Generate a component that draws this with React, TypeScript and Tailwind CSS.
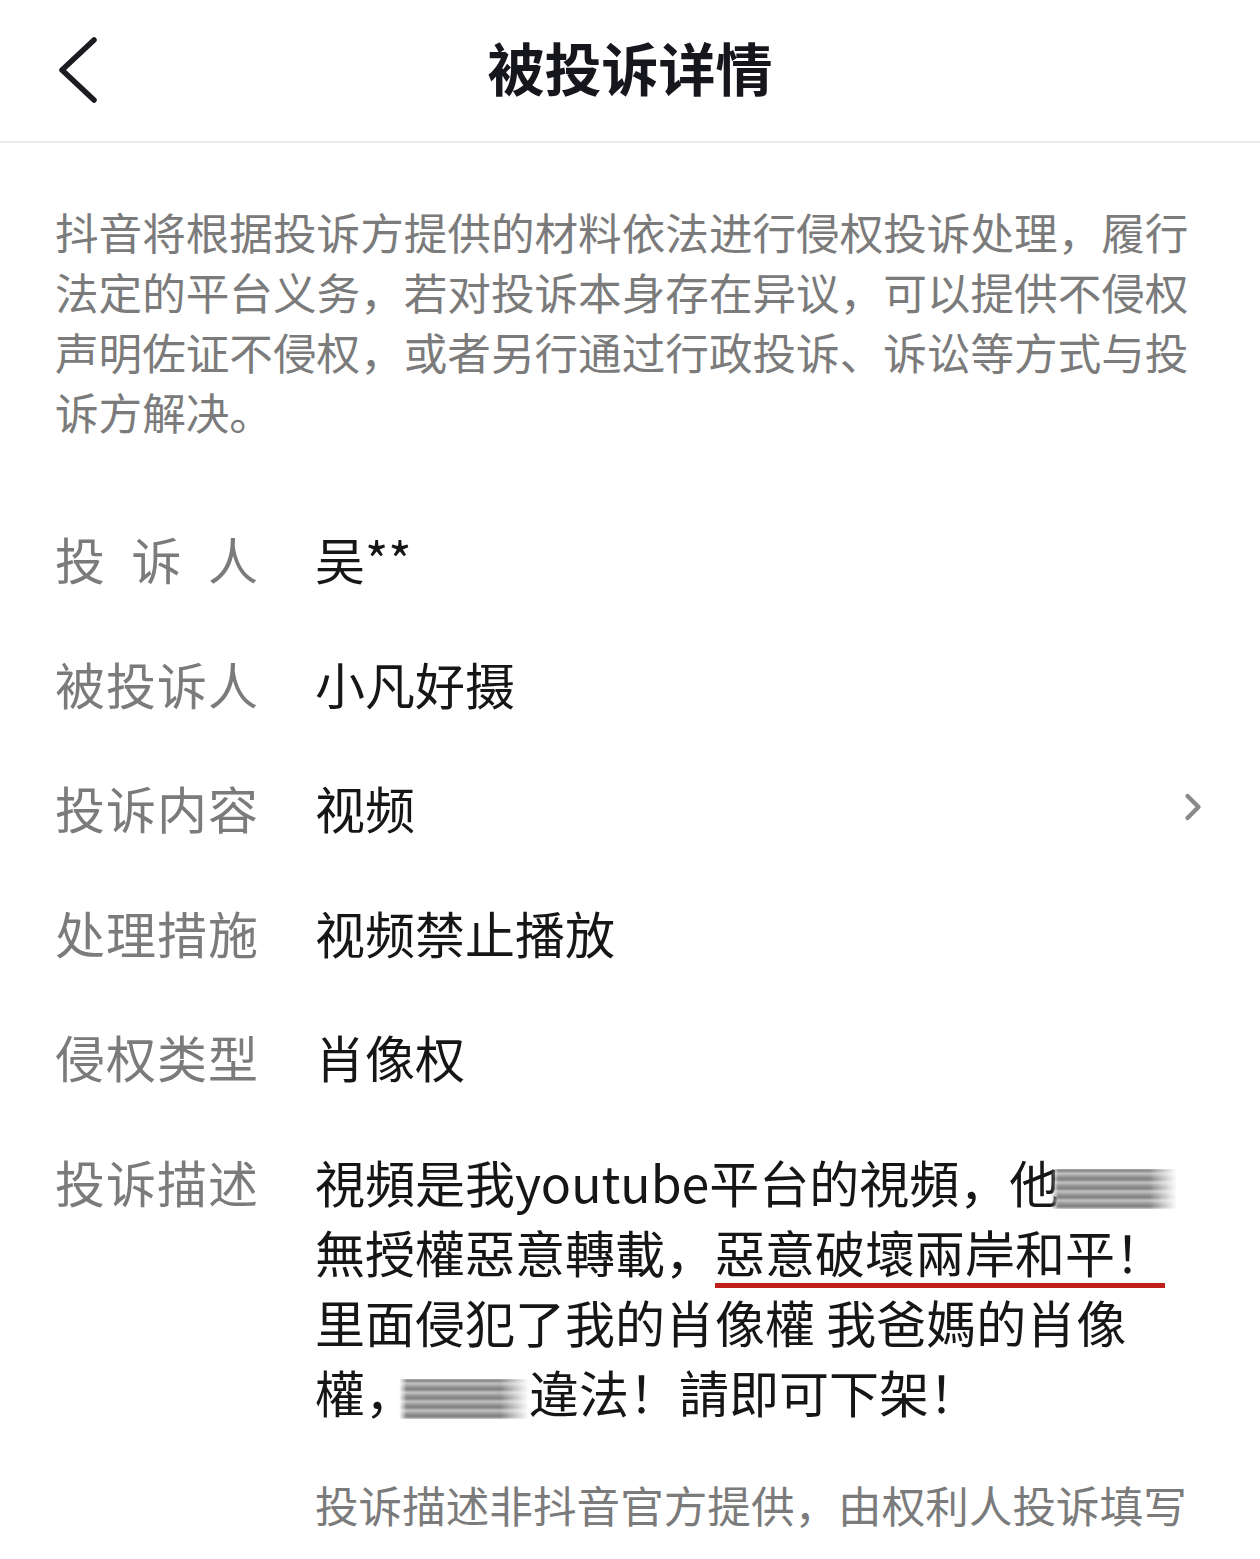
import { ChevronRight } from 'lucide-react';

const font = '[font-family:"Noto_Sans_CJK_SC","Noto_Sans",sans-serif]';

const Blur = ({ w }: { w: string }) => (
    <span
        className={`inline-block align-middle h-[40px] ${w} blur-[1.2px] bg-[repeating-linear-gradient(180deg,#5a5a5a_0px,#a0a0a0_3px,#e2e2e2_5px,#7a7a7a_7px,#c8c8c8_9px)] [mask-image:linear-gradient(90deg,transparent,black_6%,black_78%,transparent)]`}
    />
);

const rows = [
    { label: ['投', '诉', '人'], value: '吴**' },
    { label: ['被', '投', '诉', '人'], value: '小凡好摄' },
    { label: ['投', '诉', '内', '容'], value: '视频', arrow: true },
    { label: ['处', '理', '措', '施'], value: '视频禁止播放' },
    { label: ['侵', '权', '类', '型'], value: '肖像权' },
];

const Label = ({ chars }: { chars: string[] }) => (
    <div className="w-[203px] mr-[57px] flex justify-between text-[#7b7b7b] shrink-0">
        {chars.map((c, i) => (
            <span key={i}>{c}</span>
        ))}
    </div>
);

const App = () => {
    return (
        <div className={`w-[1260px] min-h-[1559px] bg-white overflow-hidden ${font}`}>
            {/* Header */}
            <div className="relative h-[143px] flex items-center justify-center border-b-2 border-[#ececec]">
                <svg className="absolute left-[56px] top-[34px] w-[46px] h-[72px]" viewBox="0 0 46 72" fill="none">
                    <polyline points="38,6 6,36 38,66" stroke="#1b1b22" strokeWidth="5.5" strokeLinecap="round" strokeLinejoin="round" />
                </svg>
                <h1 className="text-[57px] font-bold text-[#16161d] leading-none -mt-[8px]">被投诉详情</h1>
            </div>

            <div className="px-[55px]">
                {/* Notice */}
                <p className="mt-[58px] text-[43.6px] leading-[60px] text-[#7b7b7b]">
                    抖音将根据投诉方提供的材料依法进行侵权投诉处理，履行法定的平台义务，若对投诉本身存在异议，可以提供不侵权声明佐证不侵权，或者另行通过行政投诉、诉讼等方式与投诉方解决。
                </p>

                {/* Detail rows */}
                <div className="mt-[82px] flex flex-col gap-[54.5px] text-[50px] leading-[70px]">
                    {rows.map((row) => (
                        <div key={row.value} className="flex items-center">
                            <Label chars={row.label} />
                            <div className="flex-1 text-[#161616]">{row.value}</div>
                            {row.arrow && (
                                <ChevronRight className="w-[44px] h-[44px] text-[#8a8a8a] -mr-[10px]" strokeWidth={2.4} />
                            )}
                        </div>
                    ))}

                    <div className="flex items-start">
                        <Label chars={['投', '诉', '描', '述']} />
                        <div className="flex-1 text-[#161616] whitespace-nowrap">
                            視頻是我youtube平台的視頻，他<Blur w="w-[126px] -ml-[8px]" />
                            <br />
                            無授權惡意轉載，
                            <span className="underline decoration-[#c0201a] decoration-[5px] underline-offset-[10px]">惡意破壞兩岸和平！</span>
                            <br />
                            里面侵犯了我的肖像權 我爸媽的肖像
                            <br />
                            權，<Blur w="w-[130px] -ml-[16px]" />違法！請即可下架！
                        </div>
                    </div>
                </div>

                {/* Footer note */}
                <p className="mt-[48px] ml-[260px] text-[43.6px] leading-[60px] text-[#7b7b7b] whitespace-nowrap">
                    投诉描述非抖音官方提供，由权利人投诉填写
                </p>
            </div>
        </div>
    );
};

export default App;
